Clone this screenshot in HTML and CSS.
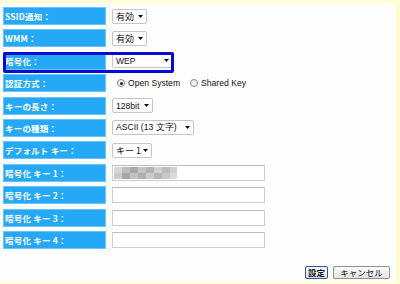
FILE: index.html
```html
<!DOCTYPE html>
<html lang="ja">
<head>
<meta charset="utf-8">
<title>無線設定</title>
<link rel="stylesheet" href="styles.css">
</head>
<body>
<div class="frame">
  <div class="panel">
    <div class="rows">
      <div class="row">
        <div class="label">SSID通知：</div>
        <div class="field"><div class="select w35"><span>有効</span><svg class="arrow" width="5" height="3" viewBox="0 0 5 3"><path d="M0 0H5L2.5 3Z"/></svg></div></div>
      </div>
      <div class="row">
        <div class="label">WMM：</div>
        <div class="field"><div class="select w35"><span>有効</span><svg class="arrow" width="5" height="3" viewBox="0 0 5 3"><path d="M0 0H5L2.5 3Z"/></svg></div></div>
      </div>
      <div class="row">
        <div class="label">暗号化：</div>
        <div class="field"><div class="select w60"><span class="latin">WEP</span><svg class="arrow" width="5" height="3" viewBox="0 0 5 3"><path d="M0 0H5L2.5 3Z"/></svg></div></div>
      </div>
      <div class="row">
        <div class="label">認証方式：</div>
        <div class="field radios">
          <label class="radio"><span class="dot on"></span><span class="latin">Open System</span></label>
          <label class="radio"><span class="dot"></span><span class="latin">Shared Key</span></label>
        </div>
      </div>
      <div class="row">
        <div class="label">キーの長さ：</div>
        <div class="field"><div class="select w41"><span class="latin">128bit</span><svg class="arrow" width="5" height="3" viewBox="0 0 5 3"><path d="M0 0H5L2.5 3Z"/></svg></div></div>
      </div>
      <div class="row">
        <div class="label">キーの種類：</div>
        <div class="field"><div class="select w82"><span class="latin">ASCII (13 文字)</span><svg class="arrow" width="5" height="3" viewBox="0 0 5 3"><path d="M0 0H5L2.5 3Z"/></svg></div></div>
      </div>
      <div class="row">
        <div class="label">デフォルト キー：</div>
        <div class="field"><div class="select w40"><span>キー 1</span><svg class="arrow" width="5" height="3" viewBox="0 0 5 3"><path d="M0 0H5L2.5 3Z"/></svg></div></div>
      </div>
      <div class="row">
        <div class="label">暗号化 キー 1：</div>
        <div class="field"><div class="input"><div class="mosaic"><span class="m1"></span><span class="m2"></span></div></div></div>
      </div>
      <div class="row">
        <div class="label">暗号化 キー 2：</div>
        <div class="field"><div class="input"></div></div>
      </div>
      <div class="row">
        <div class="label">暗号化 キー 3：</div>
        <div class="field"><div class="input"></div></div>
      </div>
      <div class="row">
        <div class="label">暗号化 キー 4：</div>
        <div class="field"><div class="input"></div></div>
      </div>
    </div>
    <div class="highlight"></div>
    <div class="buttons">
      <button class="btn primary">設定</button>
      <button class="btn cancel">キャンセル</button>
    </div>
  </div>
</div>
</body>
</html>
```

FILE: styles.css
```css
* { box-sizing: border-box; }
html, body { margin: 0; padding: 0; }
body {
  width: 400px;
  height: 284px;
  overflow: hidden;
  font-family: "Noto Sans CJK JP", "Liberation Sans", sans-serif;
}
.frame {
  width: 400px;
  height: 284px;
  background: #ffffd2;
  padding: 3px 4px 2px 0;
}
.panel {
  position: relative;
  height: 100%;
  background: #fdfdfd;
  padding: 4px 6px 0 3px;
}
.rows {
  display: flex;
  flex-direction: column;
  gap: 4.4px;
}
.row {
  display: flex;
  align-items: center;
  height: 18px;
  gap: 6px;
}
.label {
  width: 103px;
  height: 18px;
  background: #25a8f6;
  border: 1px solid #6cc4fb;
  color: #fff;
  font-size: 8.5px;
  font-weight: bold;
  line-height: 16px;
  padding-left: 1px;
  white-space: pre;
  letter-spacing: 0.2px;
}
.field {
  display: flex;
  align-items: center;
  height: 18px;
}
.select {
  height: 15px;
  border: 1px solid #c6c6c6;
  border-radius: 2px;
  background: #fff;
  display: flex;
  align-items: center;
  justify-content: space-between;
  padding: 0 3px 0 3px;
  font-size: 9px;
  color: #111;
  white-space: nowrap;
}
.latin { font-family: "Liberation Sans", Arial, sans-serif; font-size: 8.6px; }
.select .arrow { fill: #111; flex: none; }
.w35 { width: 35px; }
.w60 { width: 61px; }
.w41 { width: 41px; }
.w82 { width: 82px; }
.w40 { width: 40px; }
.radios { gap: 10px; padding-left: 5px; }
.radio {
  display: flex;
  align-items: center;
  gap: 3px;
  color: #111;
  white-space: nowrap;
}
.dot {
  width: 8px;
  height: 8px;
  border-radius: 50%;
  border: 1px solid #8a8a8a;
  background: #f0f0f0;
  position: relative;
}
.dot.on::after {
  content: "";
  position: absolute;
  left: 1.5px;
  top: 1.5px;
  width: 3px;
  height: 3px;
  border-radius: 50%;
  background: #222;
}
.input {
  width: 153px;
  height: 16px;
  border: 1px solid #cfcfcf;
  border-top-color: #bdbdbd;
  border-radius: 1px;
  background: #fff;
  padding: 1px 0 0 1px;
}
.mosaic {
  display: flex;
  flex-direction: column;
  width: 63px;
}
.mosaic span { display: block; height: 6px; }
.m1 {
  background: linear-gradient(to right,
    #d6d6d6 0 8px, #bdbdbd 8px 16px, #a9a9a9 16px 24px, #c4c4c4 24px 32px,
    #b3b3b3 32px 40px, #d2d2d2 40px 48px, #bcbcbc 48px 56px, #cfcfcf 56px 63px);
}
.m2 {
  background: linear-gradient(to right,
    #cacaca 0 8px, #a7a7a7 8px 16px, #c2c2c2 16px 24px, #b0b0b0 24px 32px,
    #cbcbcb 32px 40px, #b6b6b6 40px 48px, #c7c7c7 48px 56px, #dadada 56px 63px);
}
.highlight {
  position: absolute;
  left: 3px;
  top: 49px;
  width: 171px;
  height: 21px;
  border: 3px solid #0a0ad2;
  border-radius: 2px;
  pointer-events: none;
}
.buttons {
  display: flex;
  justify-content: flex-end;
  gap: 5px;
  margin-top: 17px;
}
.btn {
  height: 13px;
  padding: 0;
  font-family: "Noto Sans CJK JP", sans-serif;
  font-size: 8.5px;
  line-height: 11px;
  color: #111;
  background: linear-gradient(#fbfbfb, #e2e2e2);
  border: 1px solid #8f8f8f;
  border-radius: 2px;
}
.btn.primary {
  width: 23px;
  border-color: #2c56b0;
  font-weight: bold;
}
.btn.cancel { width: 57px; }
```
